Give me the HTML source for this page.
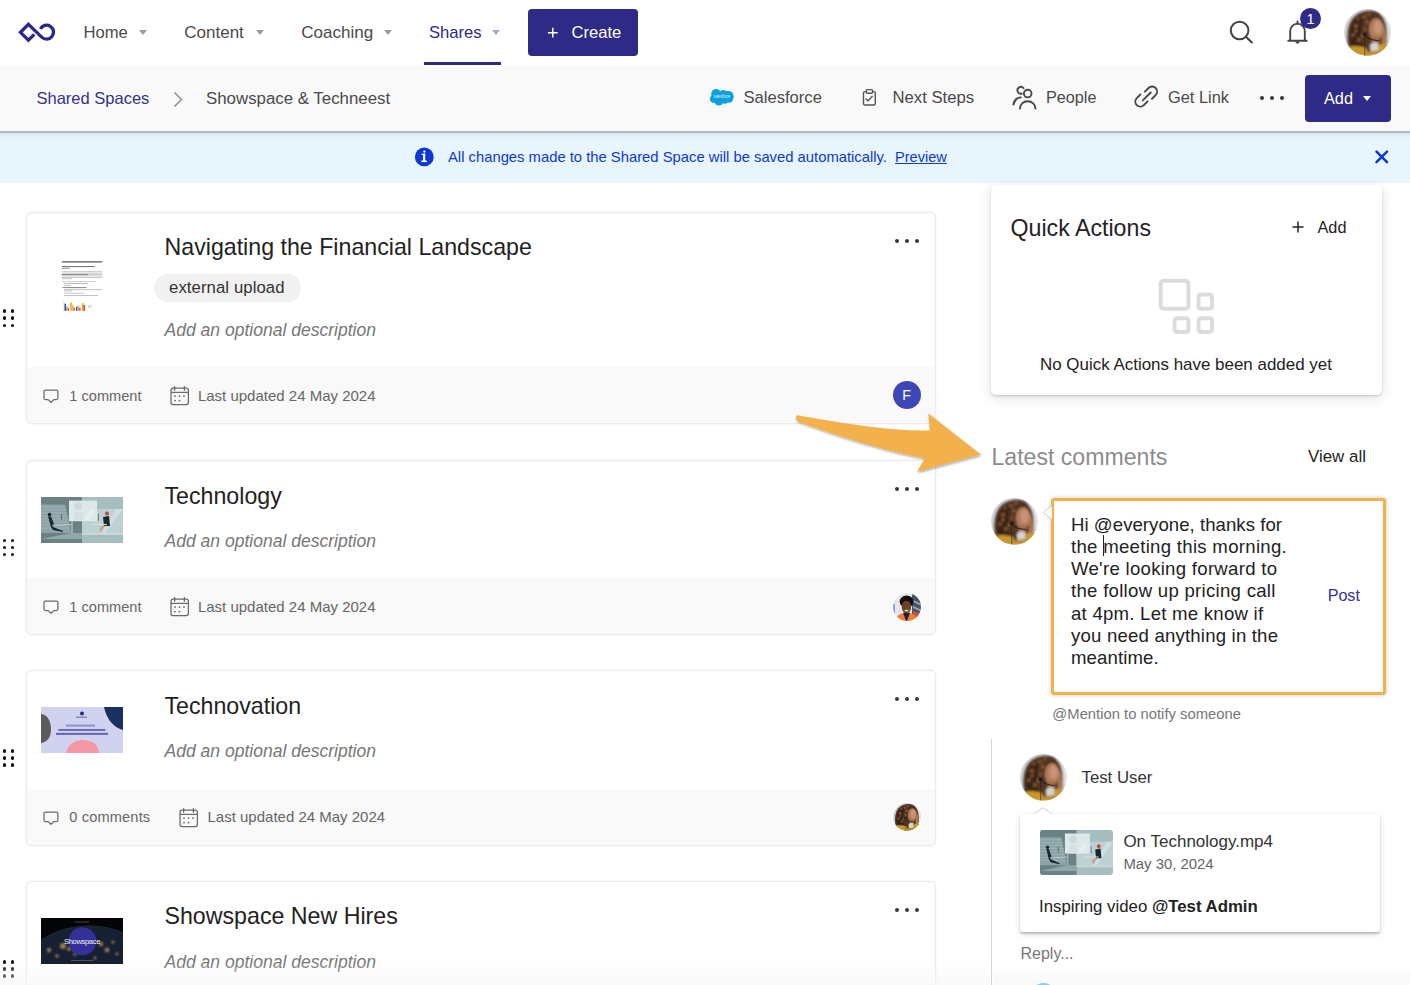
<!DOCTYPE html>
<html><head><meta charset="utf-8">
<style>
*{margin:0;padding:0;box-sizing:border-box}
html,body{width:1410px;height:985px;overflow:hidden;background:#fff;font-family:"Liberation Sans",sans-serif;color:#222}
.a{position:absolute}
.t{position:absolute;white-space:nowrap;line-height:1}
svg{position:absolute;overflow:visible}
/* nav */
#nav{left:0;top:0;width:1410px;height:66px;background:#fff}
.nav-t{font-size:16.6px;color:#4a4a4a}
.caret{position:absolute;width:0;height:0;border-left:4px solid transparent;border-right:4px solid transparent;border-top:5px solid #9b9b9b}
#sub{left:0;top:66px;width:1410px;height:65px;background:#f9f9f9;z-index:3}
#subsh{left:-30px;top:66px;width:1470px;height:65px;z-index:2;box-shadow:0 1.5px 1px rgba(0,0,0,.17),0 3px 5px rgba(0,0,0,.10)}
#banner{left:0;top:131px;width:1410px;height:52px;background:#e8f5fd}
.card{position:absolute;left:26px;width:910px;border:1px solid #ebebeb;border-radius:6px;background:#fff;overflow:hidden;box-shadow:0 0 2px rgba(0,0,0,.10)}
.foot{position:absolute;left:0;right:0;bottom:0;height:56px;background:#f9f9f9}
.title{font-size:23.2px;color:#222}
.desc{font-size:17.3px;font-style:italic;color:#777}
.ft{font-size:14.8px;color:#666}
.dots i{position:absolute;width:4px;height:4px;border-radius:50%;background:#383838}
.drag i{position:absolute;width:3.4px;height:3.4px;border-radius:50%;background:#111}
</style></head>
<body>
<svg width="1" height="1" style="left:0;top:0;position:absolute">
<defs>
<filter id="soft" x="-20%" y="-20%" width="140%" height="140%" filterUnits="objectBoundingBox"><feGaussianBlur stdDeviation="0.9"/></filter><filter id="soft2" x="-20%" y="-20%" width="140%" height="140%"><feGaussianBlur stdDeviation="0.4"/></filter>
<clipPath id="avclip"><circle cx="23.5" cy="23.5" r="23.4"/></clipPath>
<g id="woman">
<g clip-path="url(#avclip)">
<rect width="47" height="47" fill="#cdd4dc"/>
<g filter="url(#soft)">
<rect x="37" y="0" width="10" height="30" fill="#e2e5e7"/>
<path d="M5 40 C2 30 3 16 9 9 C15 2 26 0 33 3 C39 6 42 12 43 20 C44 28 43 35 39 40 L30 45 L10 45 Z" fill="#553620"/>
<path d="M7 36 C5 28 6 17 11 11 C14 8 18 7 20 9 C17 17 16 28 19 37 Z" fill="#3a2414"/>
<g fill="#7a5232"><circle cx="12" cy="17" r="2.2"/><circle cx="9" cy="26" r="2"/><circle cx="15" cy="31" r="2.2"/><circle cx="20" cy="8" r="2"/><circle cx="25" cy="5" r="1.8"/><circle cx="14" cy="10" r="1.6"/><circle cx="21" cy="20" r="1.8"/></g>
<g fill="#946a40"><circle cx="23" cy="13" r="1.5"/><circle cx="12" cy="22" r="1.3"/><circle cx="18" cy="27" r="1.3"/></g>
<path d="M38 14 C42 18 43 24 43 30 C42 35 40 38 37 39 C38 31 39 22 38 14 Z" fill="#a47650"/>
<ellipse cx="32.2" cy="20.2" rx="7.2" ry="11.2" fill="#b27b5a"/>
<ellipse cx="33.8" cy="18.4" rx="4.2" ry="7" fill="#c8937a"/>
<path d="M25 9 C29 5 34 5 38 9 C35 8 29 8 25 12 Z" fill="#4a2e1a"/>
<rect x="27.5" y="28" width="7" height="7" fill="#9c6a4a"/>
<path d="M26 36 L29 33.5 L34.5 34 L35 41.5 L26.5 42.5 Z" fill="#d6d2ce"/>
<path d="M0 47 L2 39 C7 36.5 15 37 22 39 L26 47 Z" fill="#c8992c"/>
<path d="M34 47 L35 36 C39 34 44 35 47 37 L47 47 Z" fill="#c8992c"/>
<path d="M22 43 L36 42 L36 47 L22 47 Z" fill="#c29228"/>
</g>
<path d="M21.5 27.5 Q27 31.5 34.5 31.8" fill="none" stroke="#1b1b1b" stroke-width="0.9"/>
<circle cx="20.8" cy="25.5" r="1.9" fill="#1b1b1b"/>
<path d="M20.8 27 V47" stroke="#222" stroke-width="0.6"/>
</g>
</g>
</defs></svg>
<!-- NAV -->
<div id="nav" class="a">
  <svg width="60" height="66" style="left:0;top:0">
    <g fill="none" stroke="#2a2a86" stroke-width="3.3" stroke-linejoin="miter">
      <path d="M34.3 34.3 L28.4 40.2 L20.5 32.3 L28.4 24.4 L41.7 37.1 A6.95 6.95 0 1 0 40.4 29.0"/>
    </g>
  </svg>
  <div class="t nav-t" style="left:83.5px;top:25.00px">Home</div>
  <div class="caret" style="left:139px;top:30px"></div>
  <div class="t nav-t" style="left:184.3px;top:24.00px;font-size:17px">Content</div>
  <div class="caret" style="left:256px;top:30px"></div>
  <div class="t nav-t" style="left:301.3px;top:24.00px;font-size:17px">Coaching</div>
  <div class="caret" style="left:384px;top:30px"></div>
  <div class="t nav-t" style="left:429px;top:25.00px;color:#2e2a85">Shares</div>
  <div class="caret" style="left:492px;top:30px;border-top-color:#a9a7d2"></div>
  <div class="a" style="left:424px;top:62px;width:77px;height:3px;background:#2e2a85"></div>
  <div class="a" style="left:528px;top:9px;width:110px;height:47px;background:#2e2a85;border-radius:4px"></div>
  <svg width="12" height="12" style="left:546.5px;top:26.6px"><path d="M5.8 0.8 V10.6 M0.9 5.7 H10.7" stroke="#fff" stroke-width="1.5"/></svg>
  <div class="t nav-t" style="left:571.5px;top:25.00px;color:#fff">Create</div>

  <!-- right icons -->
  <svg width="30" height="30" style="left:1226px;top:17px">
    <circle cx="13.6" cy="13.5" r="8.8" fill="none" stroke="#444" stroke-width="2"/>
    <line x1="20" y1="19.8" x2="25.8" y2="25.4" stroke="#444" stroke-width="2.1" stroke-linecap="round"/>
  </svg>
  <svg width="30" height="30" style="left:1284px;top:17px">
    <path d="M6.2 23.7 V14.2 A7.3 7.6 0 0 1 20.8 14.2 V23.7" fill="none" stroke="#444" stroke-width="1.9"/>
    <line x1="4.3" y1="23.7" x2="22.7" y2="23.7" stroke="#444" stroke-width="1.9" stroke-linecap="round"/>
    <path d="M11.4 24.6 A2.1 2.1 0 0 0 15.6 24.6 Z" fill="#444"/>
    <line x1="13.5" y1="4.4" x2="13.5" y2="6.8" stroke="#444" stroke-width="1.9" stroke-linecap="round"/>
  </svg>
  <div class="a" style="left:1300px;top:8px;width:21px;height:21px;border-radius:50%;background:#2e2a85"></div>
  <div class="t" style="left:1305px;top:12.00px;width:11px;text-align:center;font-size:14.5px;color:#fff">1</div>
  <svg width="47" height="47" viewBox="0 0 47 47" style="left:1344.3px;top:9.1px"><use href="#woman"/></svg>
</div>

<!-- SUBHEADER -->
<div id="subsh" class="a"></div>
<div id="sub" class="a">
  <div class="t" style="left:36.5px;top:24.00px;font-size:16.5px;color:#35328f">Shared Spaces</div>
  <svg width="14" height="20" style="left:172px;top:25px"><path d="M2.5 1.5 L9.5 8.5 L2.5 15.5" fill="none" stroke="#8e8e8e" stroke-width="1.5"/></svg>
  <div class="t" style="left:206px;top:25.00px;font-size:16.85px;color:#4a4a4a">Showspace &amp; Techneest</div>

  <svg width="35" height="28" style="left:705px;top:16px"><g fill="#0aa0dd">
<circle cx="11.1" cy="11.9" r="4.9"/><circle cx="18.2" cy="13.2" r="5.2"/><circle cx="23.6" cy="14.2" r="5.1"/>
<circle cx="8.8" cy="17.1" r="3.8"/><circle cx="13.9" cy="19.3" r="4.3"/><circle cx="19.6" cy="17.6" r="4.2"/><circle cx="24" cy="16.6" r="4.2"/>
<rect x="9" y="12" width="16" height="8"/></g>
<text x="16.8" y="16" font-size="4.6" fill="#cfe8f6" text-anchor="middle" font-family="Liberation Sans" font-style="italic" textLength="17">salesforce</text>
</svg>
  <div class="t" style="left:743.5px;top:24.00px;font-size:16.6px;color:#4a4a4a">Salesforce</div>

  <svg width="20" height="22" style="left:861px;top:22px">
    <rect x="2.5" y="3.6" width="11.8" height="13.4" rx="1.5" fill="none" stroke="#555" stroke-width="1.4"/>
    <rect x="5.3" y="1.6" width="6.2" height="3.6" rx="1" fill="#f9f9f9" stroke="#555" stroke-width="1.4"/>
    <path d="M4.6 10.4 L7.1 12.7 L11.6 8" fill="none" stroke="#555" stroke-width="1.4"/>
  </svg>
  <div class="t" style="left:892.5px;top:24.00px;font-size:16.7px;color:#4a4a4a">Next Steps</div>

  <svg width="28" height="28" style="left:1011px;top:19px"><g fill="none" stroke="#474747" stroke-width="1.9" stroke-linecap="round">
<circle cx="16.7" cy="8.6" r="3.8"/>
<path d="M8.9 23.6 A7.8 7.4 0 0 1 24.5 23.6"/>
<path d="M12.6 3.3 A3.4 3.4 0 1 0 10.8 8.6"/>
<path d="M2.4 19.6 A8.6 8.6 0 0 1 9.8 12.4"/>
</g></svg>
  <div class="t" style="left:1046px;top:23.00px;font-size:16.2px;color:#4a4a4a">People</div>

  <svg width="28" height="28" style="left:1133px;top:19px"><g transform="translate(0.8 24.2) scale(1.07) translate(-0.8 -24.2) translate(0 -0.6)" fill="none" stroke="#474747" stroke-width="1.8" stroke-linecap="round">
<path d="M11.2 8.4 L14.6 5 A4.6 4.6 0 0 1 21.2 11.6 L17.8 15"/>
<path d="M13.6 17.6 L10.2 21 A4.6 4.6 0 0 1 3.6 14.4 L7 11"/>
<line x1="9.2" y1="16.6" x2="16.6" y2="9.2"/>
</g></svg>
  <div class="t" style="left:1168px;top:23.00px;font-size:16.4px;color:#4a4a4a">Get Link</div>

  <div class="dots"><i style="left:1260px;top:30.2px"></i><i style="left:1269.8px;top:30.2px"></i><i style="left:1279.6px;top:30.2px"></i></div>
  <div class="a" style="left:1305px;top:9px;width:86px;height:47px;background:#2e2a85;border-radius:4px"></div>
  <div class="t" style="left:1324px;top:23.50px;font-size:16.3px;color:#fff">Add</div>
  <div class="caret" style="left:1363.3px;top:29.6px;border-top-color:#fff;border-left-width:4.6px;border-right-width:4.6px;border-top-width:5.6px"></div>
</div>

<!-- BANNER -->
<div id="banner" class="a">
  <svg width="22" height="22" style="left:413px;top:15px">
    <circle cx="11.3" cy="10.9" r="9.4" fill="#0b38d0"/>
    <g fill="#fff"><circle cx="11.4" cy="5.6" r="1.15"/><rect x="10.1" y="7.8" width="2.1" height="7.2"/><rect x="8.6" y="7.7" width="3.6" height="1.2"/><rect x="8.3" y="14.5" width="5.6" height="1.6"/></g>
  </svg>
  <div class="t" style="left:448px;top:19.00px;font-size:14.8px;color:#0d3ad0">All changes made to the Shared Space will be saved automatically.</div>
  <div class="t" style="left:895px;top:19.00px;font-size:14.6px;color:#0d3ad0;text-decoration:underline">Preview</div>
  <svg width="20" height="20" style="left:1372px;top:16px">
    <path d="M4.5 4.7 L15 15.1 M15 4.7 L4.5 15.1" stroke="#0b38d0" stroke-width="2.5" stroke-linecap="round"/>
  </svg>
</div>

<!-- CARDS -->
<div class="card" style="top:212px;height:212px"><div class="foot"></div></div>
<div class="drag"><i style="left:2.6px;top:309.3px"></i><i style="left:10.9px;top:309.3px"></i><i style="left:2.6px;top:316.4px"></i><i style="left:10.9px;top:316.4px"></i><i style="left:2.6px;top:323.5px"></i><i style="left:10.9px;top:323.5px"></i></div>
<div class="dots"><i style="left:895px;top:238.7px"></i><i style="left:904.8px;top:238.7px"></i><i style="left:914.6px;top:238.7px"></i></div>
<div class="t" style="left:164.5px;top:236.00px;font-size:23.2px;color:#222">Navigating the Financial Landscape</div>
<div class="a" style="left:153.5px;top:273.8px;width:147px;height:28px;border-radius:14px;background:#f1f1f1"></div>
<div class="t" style="left:169px;top:280.01px;font-size:16.7px;color:#333;letter-spacing:0.1px">external upload</div>
<div class="t" style="left:164.5px;top:321.50px;font-size:17.55px;font-style:italic;color:#777">Add an optional description</div>
<svg width="20" height="18" style="left:41.5px;top:388.5px"><path d="M3.5 1.1 H14.4 Q15.9 1.1 15.9 2.6 V9.1 Q15.9 10.6 14.4 10.6 H11.8 L8.95 13.3 L6.1 10.6 H3.5 Q2 10.6 2 9.1 V2.6 Q2 1.1 3.5 1.1 Z" fill="none" stroke="#6a6a6a" stroke-width="1.25" stroke-linejoin="round"/></svg>
<div class="t" style="left:69.3px;top:389.01px;font-size:14.6px;color:#666">1 comment</div>
<svg width="22" height="22" style="left:169.6px;top:385.5px"><rect x="1" y="2.2" width="17.4" height="16.4" rx="2" fill="none" stroke="#6a6a6a" stroke-width="1.25"/><line x1="1" y1="6.4" x2="18.4" y2="6.4" stroke="#6a6a6a" stroke-width="1.25"/><line x1="4.6" y1="0.7" x2="4.6" y2="4.2" stroke="#6a6a6a" stroke-width="1.3" stroke-linecap="round"/><line x1="14.4" y1="0.7" x2="14.4" y2="4.2" stroke="#6a6a6a" stroke-width="1.3" stroke-linecap="round"/><g fill="#6a6a6a"><circle cx="5" cy="10.1" r="0.95"/><circle cx="9.5" cy="10.1" r="0.95"/><circle cx="14" cy="10.1" r="0.95"/><circle cx="5" cy="14.6" r="0.95"/><circle cx="9.5" cy="14.6" r="0.95"/></g></svg>
<div class="t" style="left:197.9px;top:388.00px;font-size:15.0px;color:#666">Last updated 24 May 2024</div>
<div class="card" style="top:460px;height:175px"><div class="foot"></div></div>
<div class="drag"><i style="left:2.6px;top:538.6px"></i><i style="left:10.9px;top:538.6px"></i><i style="left:2.6px;top:545.7px"></i><i style="left:10.9px;top:545.7px"></i><i style="left:2.6px;top:552.8px"></i><i style="left:10.9px;top:552.8px"></i></div>
<div class="dots"><i style="left:895px;top:486.9px"></i><i style="left:904.8px;top:486.9px"></i><i style="left:914.6px;top:486.9px"></i></div>
<div class="t" style="left:164.5px;top:485.00px;font-size:23.2px;color:#222">Technology</div>
<div class="t" style="left:164.5px;top:532.51px;font-size:17.55px;font-style:italic;color:#777">Add an optional description</div>
<svg width="20" height="18" style="left:41.5px;top:599.5px"><path d="M3.5 1.1 H14.4 Q15.9 1.1 15.9 2.6 V9.1 Q15.9 10.6 14.4 10.6 H11.8 L8.95 13.3 L6.1 10.6 H3.5 Q2 10.6 2 9.1 V2.6 Q2 1.1 3.5 1.1 Z" fill="none" stroke="#6a6a6a" stroke-width="1.25" stroke-linejoin="round"/></svg>
<div class="t" style="left:69.3px;top:599.51px;font-size:14.6px;color:#666">1 comment</div>
<svg width="22" height="22" style="left:169.6px;top:596.5px"><rect x="1" y="2.2" width="17.4" height="16.4" rx="2" fill="none" stroke="#6a6a6a" stroke-width="1.25"/><line x1="1" y1="6.4" x2="18.4" y2="6.4" stroke="#6a6a6a" stroke-width="1.25"/><line x1="4.6" y1="0.7" x2="4.6" y2="4.2" stroke="#6a6a6a" stroke-width="1.3" stroke-linecap="round"/><line x1="14.4" y1="0.7" x2="14.4" y2="4.2" stroke="#6a6a6a" stroke-width="1.3" stroke-linecap="round"/><g fill="#6a6a6a"><circle cx="5" cy="10.1" r="0.95"/><circle cx="9.5" cy="10.1" r="0.95"/><circle cx="14" cy="10.1" r="0.95"/><circle cx="5" cy="14.6" r="0.95"/><circle cx="9.5" cy="14.6" r="0.95"/></g></svg>
<div class="t" style="left:197.9px;top:598.50px;font-size:15.0px;color:#666">Last updated 24 May 2024</div>
<div class="card" style="top:670px;height:176px"><div class="foot"></div></div>
<div class="drag"><i style="left:2.6px;top:749.2px"></i><i style="left:10.9px;top:749.2px"></i><i style="left:2.6px;top:756.3px"></i><i style="left:10.9px;top:756.3px"></i><i style="left:2.6px;top:763.4px"></i><i style="left:10.9px;top:763.4px"></i></div>
<div class="dots"><i style="left:895px;top:696.9px"></i><i style="left:904.8px;top:696.9px"></i><i style="left:914.6px;top:696.9px"></i></div>
<div class="t" style="left:164.5px;top:695.00px;font-size:23.2px;color:#222">Technovation</div>
<div class="t" style="left:164.5px;top:743.01px;font-size:17.55px;font-style:italic;color:#777">Add an optional description</div>
<svg width="20" height="18" style="left:41.5px;top:810.5px"><path d="M3.5 1.1 H14.4 Q15.9 1.1 15.9 2.6 V9.1 Q15.9 10.6 14.4 10.6 H11.8 L8.95 13.3 L6.1 10.6 H3.5 Q2 10.6 2 9.1 V2.6 Q2 1.1 3.5 1.1 Z" fill="none" stroke="#6a6a6a" stroke-width="1.25" stroke-linejoin="round"/></svg>
<div class="t" style="left:69.3px;top:810.01px;font-size:14.6px;color:#666;letter-spacing:0.15px">0 comments</div>
<svg width="22" height="22" style="left:179px;top:807.5px"><rect x="1" y="2.2" width="17.4" height="16.4" rx="2" fill="none" stroke="#6a6a6a" stroke-width="1.25"/><line x1="1" y1="6.4" x2="18.4" y2="6.4" stroke="#6a6a6a" stroke-width="1.25"/><line x1="4.6" y1="0.7" x2="4.6" y2="4.2" stroke="#6a6a6a" stroke-width="1.3" stroke-linecap="round"/><line x1="14.4" y1="0.7" x2="14.4" y2="4.2" stroke="#6a6a6a" stroke-width="1.3" stroke-linecap="round"/><g fill="#6a6a6a"><circle cx="5" cy="10.1" r="0.95"/><circle cx="9.5" cy="10.1" r="0.95"/><circle cx="14" cy="10.1" r="0.95"/><circle cx="5" cy="14.6" r="0.95"/><circle cx="9.5" cy="14.6" r="0.95"/></g></svg>
<div class="t" style="left:207.5px;top:809.00px;font-size:15.0px;color:#666">Last updated 24 May 2024</div>
<div class="card" style="top:881px;height:175px"><div class="foot"></div></div>
<div class="drag"><i style="left:2.6px;top:960.2px"></i><i style="left:10.9px;top:960.2px"></i><i style="left:2.6px;top:967.3px"></i><i style="left:10.9px;top:967.3px"></i><i style="left:2.6px;top:974.4px"></i><i style="left:10.9px;top:974.4px"></i></div>
<div class="dots"><i style="left:895px;top:907.9px"></i><i style="left:904.8px;top:907.9px"></i><i style="left:914.6px;top:907.9px"></i></div>
<div class="t" style="left:164.5px;top:905.00px;font-size:23.2px;color:#222">Showspace New Hires</div>
<div class="t" style="left:164.5px;top:954.01px;font-size:17.55px;font-style:italic;color:#777">Add an optional description</div>

<!-- RIGHT COLUMN -->
<div class="a" style="left:991px;top:185px;width:391px;height:210px;background:#fff;border-radius:5px;box-shadow:0 1px 2px rgba(0,0,0,.16),0 3px 12px rgba(0,0,0,.13)"></div>
<div class="t" style="left:1010.5px;top:216.51px;font-size:23.2px;color:#222">Quick Actions</div>
<svg width="14" height="14" style="left:1291px;top:220px"><path d="M7 1.5 V12.5 M1.5 7 H12.5" stroke="#222" stroke-width="1.5"/></svg>
<div class="t" style="left:1317.5px;top:218.51px;font-size:16.3px;color:#222">Add</div>
<svg width="60" height="60" style="left:1156px;top:276px"><g fill="none" stroke="#dcdcdc" stroke-width="4">
<rect x="4.7" y="4.8" width="27.7" height="27.9" rx="3"/>
<rect x="42.5" y="18.4" width="13.5" height="14.3" rx="2.5"/>
<rect x="18.5" y="42.2" width="13.9" height="13.8" rx="2.5"/>
<rect x="42.5" y="42.2" width="13.5" height="13.8" rx="2.5"/>
</g></svg>
<div class="t" style="left:1040px;top:357.00px;font-size:16.95px;color:#222">No Quick Actions have been added yet</div>
<div class="t" style="left:991.5px;top:445.51px;font-size:23.1px;color:#8c8c8c">Latest comments</div>
<div class="t" style="left:1308px;top:448.50px;font-size:16.9px;color:#222">View all</div>
<svg width="46.8" height="46.8" viewBox="0 0 47 47" style="left:991.1px;top:498.1px"><use href="#woman"/></svg>
<div class="a" style="left:1051px;top:498px;width:335px;height:197px;border:3.4px solid #f2b24b;border-radius:3px;background:#fff;box-shadow:0 0 4px rgba(0,0,0,.22)"></div>
<svg width="14" height="20" style="left:1040px;top:503px"><defs><filter id="ps" x="-50%" y="-50%" width="200%" height="200%"><feGaussianBlur stdDeviation="0.6"/></filter></defs><path d="M11.5 3 L3.4 9.6 L11.5 16.2" fill="none" stroke="#b8b8c0" stroke-width="1" filter="url(#ps)"/><path d="M12 3.2 L3.8 9.6 L12 16" fill="#fff"/></svg>
<div class="t" style="left:1071px;top:515.81px;font-size:18.6px;color:#222;letter-spacing:0.04px">Hi @everyone, thanks for</div>
<div class="t" style="left:1071px;top:538.01px;font-size:18.6px;color:#222;letter-spacing:0.29px">the meeting this morning.</div>
<div class="t" style="left:1071px;top:560.21px;font-size:18.6px;color:#222;letter-spacing:0.28px">We're looking forward to</div>
<div class="t" style="left:1071px;top:582.40px;font-size:18.6px;color:#222;letter-spacing:0.28px">the follow up pricing call</div>
<div class="t" style="left:1071px;top:604.61px;font-size:18.6px;color:#222;letter-spacing:0.24px">at 4pm. Let me know if</div>
<div class="t" style="left:1071px;top:626.80px;font-size:18.6px;color:#222;letter-spacing:0.19px">you need anything in the</div>
<div class="t" style="left:1071px;top:649.00px;font-size:18.6px;color:#222;letter-spacing:0.1px">meantime.</div>
<div class="a" style="left:1102.6px;top:535px;width:1px;height:21px;background:#222"></div>
<div class="t" style="left:1327.7px;top:587.01px;font-size:16.1px;color:#34329a">Post</div>
<div class="t" style="left:1052.3px;top:707.00px;font-size:14.8px;color:#777">@Mention to notify someone</div>
<div class="a" style="left:993px;top:970px;width:417px;height:15px;background:linear-gradient(#fcfcfc,#f9f9f9)"></div>
<div class="a" style="left:1031px;top:983px;width:25px;height:25px;border-radius:50%;background:#8ccaf2"></div>
<div class="a" style="left:0;top:962px;width:990px;height:23px;background:linear-gradient(rgba(250,250,250,0),rgba(246,246,246,.6))"></div>
<div class="a" style="left:991px;top:739px;width:1px;height:246px;background:#d4d4d4"></div>
<svg width="46.8" height="46.8" viewBox="0 0 47 47" style="left:1020.0000000000001px;top:753.6px"><use href="#woman"/></svg>
<div class="t" style="left:1081.5px;top:769.81px;font-size:16.8px;color:#333">Test User</div>
<div class="a" style="left:1020px;top:814px;width:359.5px;height:117.5px;background:#fff;border-radius:3px;box-shadow:0 1.5px 2px rgba(0,0,0,.2),0 2px 7px rgba(0,0,0,.12)"></div>
<svg width="24" height="14" style="left:1030.5px;top:805px"><path d="M3 9 L12 2.8 L21 9" fill="none" stroke="#d6d6d6" stroke-width="1.2" filter="url(#ps)"/><path d="M2.5 9.4 L12 3.4 L21.5 9.4 V12 H2.5 Z" fill="#fff"/></svg>
<div class="t" style="left:1123.4px;top:832.51px;font-size:17.0px;color:#333">On Technology.mp4</div>
<div class="t" style="left:1123.4px;top:857.01px;font-size:14.9px;color:#666">May 30, 2024</div>
<div class="t" style="left:1039px;top:898.81px;font-size:16.8px;color:#222">Inspiring video <b style="color:#222">@Test Admin</b></div>
<div class="t" style="left:1020.5px;top:945.80px;font-size:16.0px;color:#777">Reply...</div>

<!-- THUMBS -->
<svg width="42" height="52" viewBox="0 0 42 52" style="left:61px;top:260px">
<rect x="0.8" y="1.2" width="40.4" height="1.3" fill="#5a5a5a"/>
<rect x="0.8" y="6" width="33" height="1.1" fill="#777"/><rect x="0.8" y="7.8" width="8" height="0.9" fill="#888"/>
<g fill="#b4b4b4"><rect x="0.8" y="11.4" width="40.4" height="0.7"/><rect x="0.8" y="12.8" width="40.4" height="0.7"/><rect x="0.8" y="15.6" width="40.4" height="0.7"/><rect x="0.8" y="17" width="40.4" height="0.7"/><rect x="0.8" y="18.4" width="10" height="0.7"/></g>
<rect x="0.8" y="14.2" width="26" height="0.9" fill="#6a6a6a"/><rect x="27.5" y="14.2" width="13.7" height="0.7" fill="#b4b4b4"/>
<rect x="0.8" y="21" width="34" height="0.7" fill="#b8b8b8"/>
<g fill="#a8a8a8"><rect x="3" y="23.2" width="24" height="0.8"/><rect x="3" y="25.2" width="7" height="0.7"/><rect x="3" y="29.4" width="38" height="0.7"/><rect x="3" y="30.6" width="8" height="0.7"/><rect x="3" y="32.8" width="20" height="0.7"/><rect x="3" y="35" width="34" height="0.7"/></g>
<rect x="1.5" y="27.2" width="24" height="0.9" fill="#777"/>
<rect x="2.5" y="39" width="0.6" height="12" fill="#ddd"/>
<rect x="3.4" y="43.6" width="1.6" height="7.2" fill="#2a56c6"/><rect x="5" y="46.4" width="1.6" height="4.4" fill="#f0a62c"/><rect x="6.6" y="48.2" width="1.4" height="2.6" fill="#e2462a"/>
<rect x="9.2" y="42.4" width="1.6" height="8.4" fill="#f0a62c"/><rect x="10.8" y="44.6" width="1.6" height="6.2" fill="#f4c232"/><rect x="12.4" y="47.6" width="1.4" height="3.2" fill="#e2462a"/>
<rect x="15" y="46.8" width="1.6" height="4" fill="#2a56c6"/><rect x="16.6" y="45.6" width="1.6" height="5.2" fill="#f0a62c"/><rect x="18.2" y="48" width="1.4" height="2.8" fill="#e2462a"/>
<rect x="20.8" y="43" width="1.6" height="7.8" fill="#f0a62c"/><rect x="22.4" y="45" width="1.6" height="5.8" fill="#e2462a"/>
<g fill="#bbb"><rect x="27" y="45.4" width="4" height="0.8"/><rect x="27" y="46.8" width="3" height="0.8"/></g>
</svg>
<svg width="82" height="46" viewBox="0 0 82 46" preserveAspectRatio="none" style="left:41px;top:497px">
<defs><clipPath id="tt1"><rect width="82" height="46" rx="0"/></clipPath></defs>
<g clip-path="url(#tt1)">
<rect width="82" height="46" fill="#a7bec1"/>
<rect width="41" height="46" fill="#6c8184"/>
<path d="M0 7.5 H24 L30 36 H0 Z" fill="#8da4a7"/>
<g stroke="#a2b7ba" stroke-width="0.8"><line x1="0" y1="10" x2="25" y2="10"/><line x1="0" y1="13" x2="25.5" y2="13"/><line x1="0" y1="16" x2="26" y2="16"/><line x1="0" y1="19" x2="27" y2="19"/><line x1="0" y1="22" x2="27.5" y2="22"/><line x1="0" y1="25" x2="28" y2="25"/><line x1="0" y1="28" x2="28.5" y2="28"/><line x1="0" y1="31" x2="29" y2="31"/></g>
<path d="M0 42 L30 36 H41 V42 Z" fill="#90a6a9"/>
<path d="M41 12 H82 V36 H41 Z" fill="#bdd0d2"/>
<path d="M60 36 L75 12 H82 L64 36 Z" fill="#cfdfe0"/>
<path d="M41 36 H82 V38 H41 Z" fill="#c8d8da"/>
<rect x="28" y="3.6" width="28" height="20.6" fill="#dde8ea"/>
<circle cx="37" cy="9.4" r="4" fill="#ccdadc"/>
<rect x="33" y="15" width="9" height="8" fill="#d4e0e2"/>
<path d="M44 23 L49 13 H53 L48 23 Z" fill="#e6eeef"/>
<rect x="30" y="24" width="2" height="12" fill="#9bb0b3"/>
<path d="M8 22 L12 30 L22 34 L22 35 L12 33 L10 30 Z" fill="#18232a"/>
<circle cx="8.5" cy="17.6" r="1.8" fill="#18232a"/>
<path d="M7 19.5 L10 19.5 L13 27 L10 29 Z" fill="#1d2a33"/>
<rect x="20" y="17" width="1" height="6" fill="#58686b"/>
<path d="M62 20 L68 19 L69 29 L63 29 Z" fill="#1b262d"/>
<circle cx="66" cy="16.6" r="2" fill="#c4443a"/>
<path d="M58 32 L62 28 L64 29 L60 35 Z" fill="#c9a48a"/>
<rect x="57" y="16.8" width="0.8" height="7" fill="#58686b"/>
<path d="M14 28 L30 27 L30 28 L14 29 Z" fill="#b9cacc"/>
<path d="M50 27 L66 27 L66 28 L50 28 Z" fill="#d6e2e3"/>
</g></svg>
<svg width="82" height="46" viewBox="0 0 82 46" style="left:41px;top:707px">
<defs><clipPath id="tv"><rect width="82" height="46"/></clipPath></defs>
<g clip-path="url(#tv)">
<rect width="82" height="46" fill="#d1d1f0"/>
<path d="M-2 7 C6 6 10 14 10 22 C10 31 6 36 -2 36 Z" fill="#5b5b5b"/>
<path d="M63 0 H82 V23 C74 21 66 14 63 0 Z" fill="#1a3160"/>
<path d="M25 46 C27 38 33 33 41 33 C50 33 57 36 58 46 Z" fill="#f597a4"/>
<circle cx="41" cy="6.6" r="2" fill="#2c2a7a"/>
<rect x="35" y="9.6" width="11" height="1.2" fill="#7a78b4"/>
<rect x="25" y="17.6" width="29" height="2" fill="#8f8dc6"/>
<rect x="17.4" y="22.3" width="47" height="1.3" fill="#3a3896"/>
<rect x="15" y="25.9" width="52" height="2" fill="#6664b0"/>
</g></svg>
<svg width="82" height="46" viewBox="0 0 82 46" style="left:41px;top:918px">
<defs><clipPath id="ss"><rect width="82" height="46"/></clipPath><filter id="lb" x="-50%" y="-50%" width="200%" height="200%"><feGaussianBlur stdDeviation="1.2"/></filter></defs>
<g clip-path="url(#ss)">
<rect width="82" height="46" fill="#040508"/>
<ellipse cx="48" cy="80" rx="80" ry="72" fill="none" stroke="#2c4a3a" stroke-width="0.8"/>
<ellipse cx="48" cy="80" rx="80" ry="72" fill="#172033"/>
<g fill="#d8a458" filter="url(#lb)" opacity="0.7"><circle cx="8" cy="32" r="2.2"/><circle cx="22" cy="28" r="3"/><circle cx="28" cy="31" r="2"/><circle cx="60" cy="26" r="2.2"/><circle cx="66" cy="32" r="2.4"/><circle cx="72" cy="24" r="1.6"/><circle cx="16" cy="38" r="1.8"/><circle cx="34" cy="36" r="1.6"/><circle cx="54" cy="40" r="1.4"/><circle cx="76" cy="36" r="1.4"/></g>
<circle cx="41.3" cy="23.3" r="14" fill="#33309a"/>
<text x="41" y="26.3" font-size="7.6" fill="#f2f2f2" text-anchor="middle" font-family="Liberation Sans" letter-spacing="-0.35">Showspace</text>
<rect x="34" y="3.6" width="14" height="0.8" fill="#555"/>
<rect x="30" y="42.4" width="22" height="0.6" fill="#777"/>
</g></svg>
<div class="a" style="left:892px;top:380px;width:30px;height:30px;border-radius:50%;background:#fff"></div><div class="a" style="left:893px;top:381px;width:28px;height:28px;border-radius:50%;background:#3f47b8"></div><div class="t" style="left:892.5px;top:387.6px;width:28px;text-align:center;font-size:14.2px;color:#fff">F</div>
<svg width="30" height="30" viewBox="0 0 30 30" style="left:892px;top:591.5px"><defs><clipPath id="f2"><circle cx="15" cy="15" r="14"/></clipPath></defs>
<circle cx="15" cy="15" r="15" fill="#fff"/><g clip-path="url(#f2)" filter="url(#soft2)"><rect width="30" height="30" fill="#e4e7ec"/>
<path d="M20 2 L30 6 V30 L20 30 Z" fill="#4a5566"/><path d="M21 8 L30 12 V14 L21 10 Z M21 14 L30 18 V20 L21 16 Z" fill="#9aa6b8"/><path d="M21 19 L30 22 V30 H21 Z" fill="#c4553c"/>
<rect x="0" y="12" width="3" height="10" fill="#8aa0d0"/>
<ellipse cx="14.6" cy="9.4" rx="7" ry="6" fill="#17110d"/><ellipse cx="14.4" cy="15" rx="4.7" ry="6.3" fill="#6e3f27"/><ellipse cx="14.5" cy="18.6" rx="2" ry="0.9" fill="#eee"/>
<path d="M3 31 C4 23 8 21 14.5 21 C21 21 25 23 26 31 Z" fill="#f07c38"/><path d="M11 21 L14.5 30 L18 21 Z" fill="#1d2230"/></g></svg>
<div class="a" style="left:892px;top:802px;width:30px;height:30px;border-radius:50%;background:#fff"></div><svg width="28" height="28" viewBox="0 0 47 47" style="left:893px;top:803px"><use href="#woman"/></svg>
<svg width="73" height="45" viewBox="0 0 82 46" preserveAspectRatio="none" style="border-radius:3px;left:1040px;top:829.5px">
<defs><clipPath id="tt2"><rect width="82" height="46" rx="3.4" ry="3.4"/></clipPath></defs>
<g clip-path="url(#tt2)">
<rect width="82" height="46" fill="#a7bec1"/>
<rect width="41" height="46" fill="#6c8184"/>
<path d="M0 7.5 H24 L30 36 H0 Z" fill="#8da4a7"/>
<g stroke="#a2b7ba" stroke-width="0.8"><line x1="0" y1="10" x2="25" y2="10"/><line x1="0" y1="13" x2="25.5" y2="13"/><line x1="0" y1="16" x2="26" y2="16"/><line x1="0" y1="19" x2="27" y2="19"/><line x1="0" y1="22" x2="27.5" y2="22"/><line x1="0" y1="25" x2="28" y2="25"/><line x1="0" y1="28" x2="28.5" y2="28"/><line x1="0" y1="31" x2="29" y2="31"/></g>
<path d="M0 42 L30 36 H41 V42 Z" fill="#90a6a9"/>
<path d="M41 12 H82 V36 H41 Z" fill="#bdd0d2"/>
<path d="M60 36 L75 12 H82 L64 36 Z" fill="#cfdfe0"/>
<path d="M41 36 H82 V38 H41 Z" fill="#c8d8da"/>
<rect x="28" y="3.6" width="28" height="20.6" fill="#dde8ea"/>
<circle cx="37" cy="9.4" r="4" fill="#ccdadc"/>
<rect x="33" y="15" width="9" height="8" fill="#d4e0e2"/>
<path d="M44 23 L49 13 H53 L48 23 Z" fill="#e6eeef"/>
<rect x="30" y="24" width="2" height="12" fill="#9bb0b3"/>
<path d="M8 22 L12 30 L22 34 L22 35 L12 33 L10 30 Z" fill="#18232a"/>
<circle cx="8.5" cy="17.6" r="1.8" fill="#18232a"/>
<path d="M7 19.5 L10 19.5 L13 27 L10 29 Z" fill="#1d2a33"/>
<rect x="20" y="17" width="1" height="6" fill="#58686b"/>
<path d="M62 20 L68 19 L69 29 L63 29 Z" fill="#1b262d"/>
<circle cx="66" cy="16.6" r="2" fill="#c4443a"/>
<path d="M58 32 L62 28 L64 29 L60 35 Z" fill="#c9a48a"/>
<rect x="57" y="16.8" width="0.8" height="7" fill="#58686b"/>
<path d="M14 28 L30 27 L30 28 L14 29 Z" fill="#b9cacc"/>
<path d="M50 27 L66 27 L66 28 L50 28 Z" fill="#d6e2e3"/>
</g></svg>

<!-- ARROW -->
<svg width="1410" height="985" style="left:0;top:0;pointer-events:none">
  <defs><filter id="sh" x="-10%" y="-30%" width="130%" height="160%"><feDropShadow dx="0.8" dy="1.4" stdDeviation="0.9" flood-color="#000" flood-opacity="0.35"/></filter></defs>
  <path filter="url(#sh)" fill="#f2b14c" d="M797 415.3 C845 423.5 885 431 929.7 430.5 L928.3 413.5 L980.8 454.6 L917 471.7 L924.8 458.2 C900 454 850 441 797.5 421.2 Q794.2 418.2 797 415.3 Z"/>
</svg>
</body></html>
